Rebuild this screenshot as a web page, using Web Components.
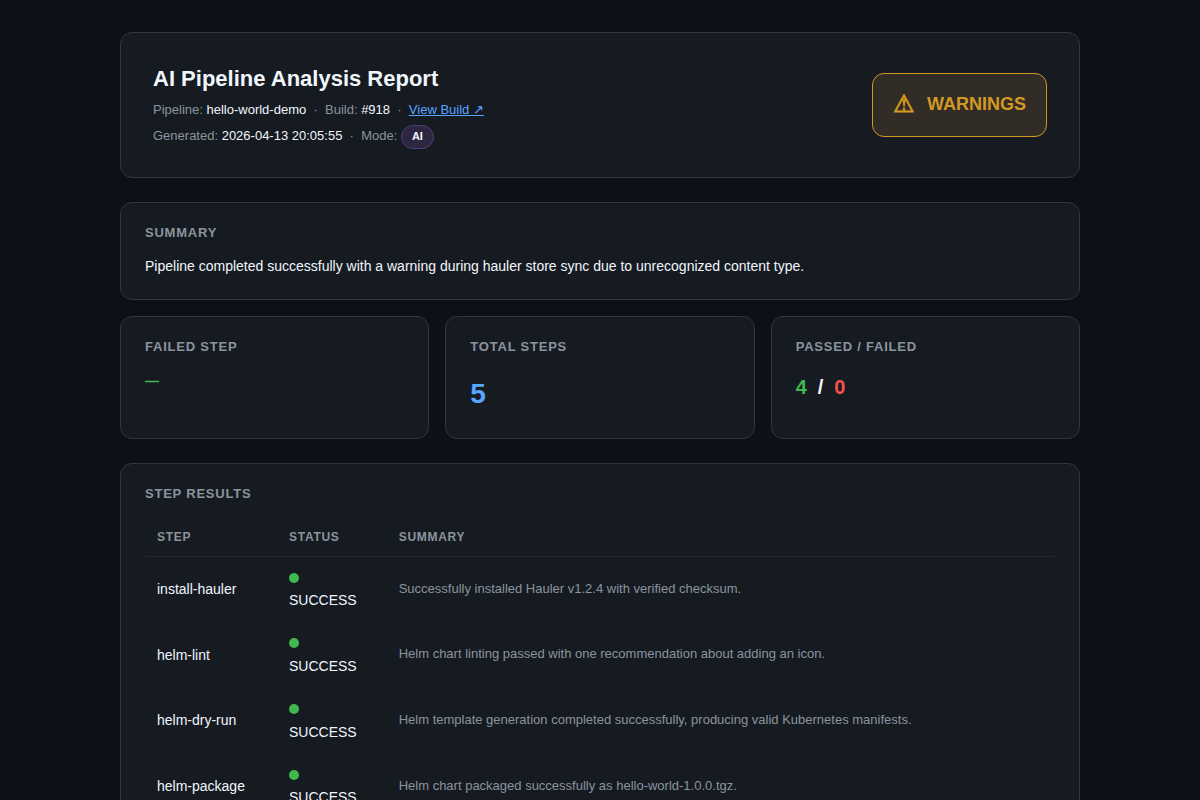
<!DOCTYPE html>
<html lang="en"><head><meta charset="utf-8"><title>AI Pipeline Analysis Report</title>
<style>
html,body{margin:0;padding:0;background:#0d1117}
body{font-family:"Liberation Sans",Arial,sans-serif;color:#e6edf3;font-size:14px;line-height:1.6}
</style></head><body>
<report-page>
  <report-header></report-header>
  <report-card label="Summary"><summary-text>Pipeline completed successfully with a warning during hauler store sync due to unrecognized content type.</summary-text></report-card>
  <stat-grid>
    <report-card label="Failed Step"><stat-value kind="dash">—</stat-value></report-card>
    <report-card label="Total Steps"><stat-value kind="big">5</stat-value></report-card>
    <report-card label="Passed / Failed"><stat-value kind="ratio" passed="4" failed="0"></stat-value></report-card>
  </stat-grid>
  <step-results></step-results>
</report-page>
<script>
function def(name,render){
  customElements.define(name,class extends HTMLElement{
    constructor(){super();this.attachShadow({mode:'open'});}
    connectedCallback(){this.shadowRoot.innerHTML=render(this);}
  });
}
def('report-page',()=>`<style>:host{display:flex;flex-direction:column;gap:24px;width:960px;margin:0 auto;padding:32px 0;box-sizing:border-box}</style><slot></slot>`);
def('report-header',()=>`<style>
:host{display:flex;align-items:center;justify-content:space-between;background:#161b22;border:1px solid #30363d;border-radius:12px;padding:32px;height:146px;box-sizing:border-box}
.info{padding-top:3px}
h1{margin:0 0 8px;font-size:22px;line-height:27px;font-weight:700;color:#f0f6fc}
.meta{font-size:13px;line-height:20.8px;color:#8b949e;display:flex;align-items:center;white-space:pre}
.meta+.meta{margin-top:3px}
.meta b{font-weight:400;color:#f0f6fc}
a{color:#58a6ff;text-decoration:underline}
.pill{display:inline-block;padding:0 10px;height:24px;line-height:20px;box-sizing:border-box;border-radius:12px;margin:1px 0 -1px;background:#2d2640;border:1px solid #4b3f72;color:#f0f6fc;font-size:11px;font-weight:700}
.badge{display:flex;align-items:center;gap:12px;height:64px;padding:0 20px 2px;box-sizing:border-box;border:1px solid #d29922;border-radius:12px;background:#312c26;color:#d29922;font-size:18px;font-weight:700}
.glyph{font-size:24px;font-weight:700;line-height:28px}
</style>
<div class="info"><h1>AI Pipeline Analysis Report</h1>
<div class="meta">Pipeline: <b>hello-world-demo</b>  ·  Build: <b>#918</b>  ·  <a href="#">View Build ↗</a></div>
<div class="meta">Generated: <b>2026-04-13 20:05:55</b>  ·  Mode: <span class="pill">AI</span></div></div>
<div class="badge"><span class="glyph">⚠</span><span>WARNINGS</span></div>`);
def('report-card',el=>`<style>
:host{display:block;background:#161b22;border:1px solid #30363d;border-radius:12px;padding:20px 24px;box-sizing:border-box}
.l{font-size:13px;line-height:20.8px;font-weight:700;letter-spacing:.78px;color:#8b949e;text-transform:uppercase;margin-bottom:12px}
</style><div class="l">${el.getAttribute('label')}</div><slot></slot>`);
def('summary-text',()=>`<style>:host{display:block;font-size:14px;line-height:22.4px;color:#f0f6fc;margin-top:-1px;padding-bottom:1.8px}</style><slot></slot>`);
def('stat-grid',()=>`<style>:host{display:grid;grid-template-columns:repeat(3,1fr);gap:16px;margin-top:-8px}</style><slot></slot>`);
def('stat-value',el=>{
  const k=el.getAttribute('kind');
  if(k==='dash')return `<style>:host{display:block;color:#3fb950;font-size:14px;font-weight:700;line-height:26px;height:48px;margin-top:-2px;margin-bottom:1px}</style><slot></slot>`;
  if(k==='big')return `<style>:host{display:block;color:#58a6ff;font-size:28px;font-weight:700;line-height:45px;height:48px;padding-top:1px;margin-bottom:-1px}</style><slot></slot>`;
  return `<style>:host{display:block;font-size:20px;font-weight:700;line-height:32px;padding-top:1px;height:47px}
.p{color:#3fb950}.f{color:#f85149}.s{color:#f0f6fc;margin:0 11px}</style><span class="p">${el.getAttribute('passed')}</span><span class="s">/</span><span class="f">${el.getAttribute('failed')}</span>`;
});
const steps=[['install-hauler','Successfully installed Hauler v1.2.4 with verified checksum.'],
['helm-lint','Helm chart linting passed with one recommendation about adding an icon.'],
['helm-dry-run','Helm template generation completed successfully, producing valid Kubernetes manifests.'],
['helm-package','Helm chart packaged successfully as hello-world-1.0.0.tgz.'],
['hauler-store-sync','Hauler store sync completed with a warning about an unrecognized content type.']];
def('step-results',()=>`<style>
:host{display:block;background:#161b22;border:1px solid #30363d;border-radius:12px;padding:20px 24px;box-sizing:border-box}
.l{font-size:13px;line-height:20.8px;font-weight:700;letter-spacing:.78px;color:#8b949e;margin-bottom:12px}
table{width:100%;border-collapse:collapse;table-layout:fixed}
th{text-align:left;font-size:12px;line-height:19.2px;font-weight:700;letter-spacing:.72px;color:#8b949e;padding:11px 12px 8.8px;border-bottom:1px solid #21262d}
td{padding:10px 12px;font-size:14px;line-height:22.4px;color:#f0f6fc;vertical-align:middle;border-bottom:1px solid #161b22}
td:last-child{font-size:13px;color:#8b949e;padding-bottom:10.4px}
i{display:inline-block;width:10px;height:10px;border-radius:50%;background:#3fb950;margin-right:6px}
</style><div class="l">STEP RESULTS</div>
<table><colgroup><col style="width:132px"><col style="width:109.7px"><col></colgroup>
<thead><tr><th>STEP</th><th>STATUS</th><th>SUMMARY</th></tr></thead>
<tbody>${steps.map(s=>`<tr><td>${s[0]}</td><td><i></i><br>SUCCESS</td><td>${s[1]}</td></tr>`).join('')}</tbody></table>`);
</script>
</body></html>
